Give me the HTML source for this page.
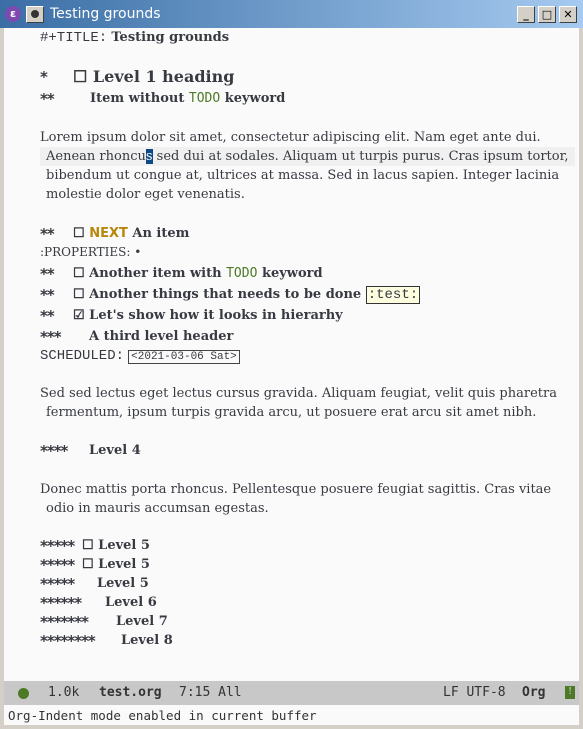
<!DOCTYPE html>
<html><head><style>
body{margin:0;width:583px;height:729px;overflow:hidden;background:#d4d0c8;font-family:"DejaVu Serif","Liberation Serif",serif;}
#tb{position:absolute;left:0;top:0;width:583px;height:28px;background:linear-gradient(90deg,#3a6ea5,#a6caf0);}
#win{position:absolute;left:4px;top:28px;width:575px;height:697px;background:#fafafa;}
.l{position:absolute;left:40px;font-size:13px;line-height:19px;color:#383a42;white-space:pre;}
.h{font-weight:bold;}
.st{position:absolute;left:40px;font:bold 15px "DejaVu Sans",sans-serif;color:#383a42;letter-spacing:-1px;line-height:19px}
.m{font-family:"Liberation Mono","DejaVu Sans Mono",monospace;}
.todo{color:#4e7a27;font-family:"DejaVu Sans Mono",monospace;font-weight:normal}
.btn{position:absolute;top:6px;width:16px;height:15px;background:#d4d0c8;border:1px solid;border-color:#fff #404040 #404040 #fff;font:bold 11px "DejaVu Sans",sans-serif;text-align:center;line-height:15px;color:#000}
.mo{position:absolute;font:13px "DejaVu Sans Mono",monospace;color:#333;line-height:24px;top:0}
</style></head><body>
<div id="tb">
<div style="position:absolute;left:5px;top:6px;width:16px;height:16px;border-radius:50%;background:#7d4bb0;color:#fff;font:bold 11px 'DejaVu Sans';text-align:center;line-height:16px">ε</div>
<div class="btn" style="left:26px;top:6px"><span style="display:inline-block;width:8px;height:8px;border-radius:50%;background:#333;margin-top:3px"></span></div>
<div style="position:absolute;left:50px;top:6px;color:#fff;font:14px 'DejaVu Sans',sans-serif">Testing grounds</div>
<div class="btn" style="left:517px">_</div>
<div class="btn" style="left:538px">□</div>
<div class="btn" style="left:559px">✕</div>
</div>
<div id="win">
<div style="position:relative;left:-4px;top:-28px">
<div class="l" style="top:28px"><span class="m" style="font-size:14px">#+TITLE:</span> <b>Testing grounds</b></div>

<div class="st" style="top:68px">*</div><div class="l h" style="top:67px;left:73px;font-size:16px">☐ Level 1 heading</div>
<div class="st" style="top:90px">**</div><div class="l h" style="top:89px;left:90px">Item without <span class="todo">TODO</span> keyword</div>

<div class="l" style="top:128px">Lorem ipsum dolor sit amet, consectetur adipiscing elit. Nam eget ante dui.</div>
<div style="position:absolute;left:40px;top:147px;width:535px;height:19px;background:#f0f0f0"></div>
<div class="l" style="top:147px;left:46px">Aenean rhoncu<span style="background:#0c4a85;color:#fff">s</span> sed dui at sodales. Aliquam ut turpis purus. Cras ipsum tortor,</div>
<div class="l" style="top:166px;left:46px">bibendum ut congue at, ultrices at massa. Sed in lacus sapien. Integer lacinia</div>
<div class="l" style="top:185px;left:46px">molestie dolor eget venenatis.</div>

<div class="st" style="top:225px">**</div><div class="l h" style="top:224px;left:73px">☐ <span style="color:#b8860b;font-family:'DejaVu Sans'">NEXT</span> An item</div>
<div class="l" style="top:243px;font-size:12px">:PROPERTIES: •</div>
<div class="st" style="top:265px">**</div><div class="l h" style="top:264px;left:73px">☐ Another item with <span class="todo">TODO</span> keyword</div>
<div class="st" style="top:286px">**</div><div class="l h" style="top:285px;left:73px">☐ Another things that needs to be done <span class="m" style="font-weight:normal;font-size:14px;background:#fdfde0;border:1px solid #333;padding:0 1px">:test:</span></div>
<div class="st" style="top:307px">**</div><div class="l h" style="top:306px;left:73px">☑ Let's show how it looks in hierarhy</div>
<div class="st" style="top:328px">***</div><div class="l h" style="top:327px;left:89px">A third level header</div>
<div class="l" style="top:346px"><span class="m" style="font-size:14px">SCHEDULED:</span> <span class="m" style="font-size:11px;border:1px solid #444;padding:0 2px">&lt;2021-03-06 Sat&gt;</span></div>

<div class="l" style="top:384px">Sed sed lectus eget lectus cursus gravida. Aliquam feugiat, velit quis pharetra</div>
<div class="l" style="top:403px;left:46px">fermentum, ipsum turpis gravida arcu, ut posuere erat arcu sit amet nibh.</div>
<div class="st" style="top:442px">****</div><div class="l h" style="top:441px;left:89px">Level 4</div>
<div class="l" style="top:480px">Donec mattis porta rhoncus. Pellentesque posuere feugiat sagittis. Cras vitae</div>
<div class="l" style="top:499px;left:46px">odio in mauris accumsan egestas.</div>

<div class="st" style="top:537px">*****</div><div class="l h" style="top:536px;left:82px">☐ Level 5</div>
<div class="st" style="top:556px">*****</div><div class="l h" style="top:555px;left:82px">☐ Level 5</div>
<div class="st" style="top:575px">*****</div><div class="l h" style="top:574px;left:97px">Level 5</div>
<div class="st" style="top:594px">******</div><div class="l h" style="top:593px;left:105px">Level 6</div>
<div class="st" style="top:613px">*******</div><div class="l h" style="top:612px;left:116px">Level 7</div>
<div class="st" style="top:632px">********</div><div class="l h" style="top:631px;left:121px">Level 8</div>

<div style="position:absolute;left:4px;top:681px;width:575px;height:24px;background:#c8c8c8">
<span style="position:absolute;left:14px;top:7px;width:11px;height:11px;border-radius:50%;background:#4e7a27"></span>
<span class="mo" style="left:44px">1.0k</span>
<span class="mo" style="left:95px;font-weight:bold">test.org</span>
<span class="mo" style="left:175px">7:15 All</span>
<span class="mo" style="left:439px">LF UTF-8</span>
<span class="mo" style="left:518px;font-weight:bold">Org</span>
<span style="position:absolute;left:561px;top:5px;width:10px;height:13px;background:#4e7a27;color:#ddd;font-size:9px;line-height:13px;text-align:center">!</span>
</div>
<div style="position:absolute;left:8px;top:706px;font:12.5px 'DejaVu Sans Mono',monospace;color:#333;line-height:20px">Org-Indent mode enabled in current buffer</div>
</div>
</div>
</body></html>
